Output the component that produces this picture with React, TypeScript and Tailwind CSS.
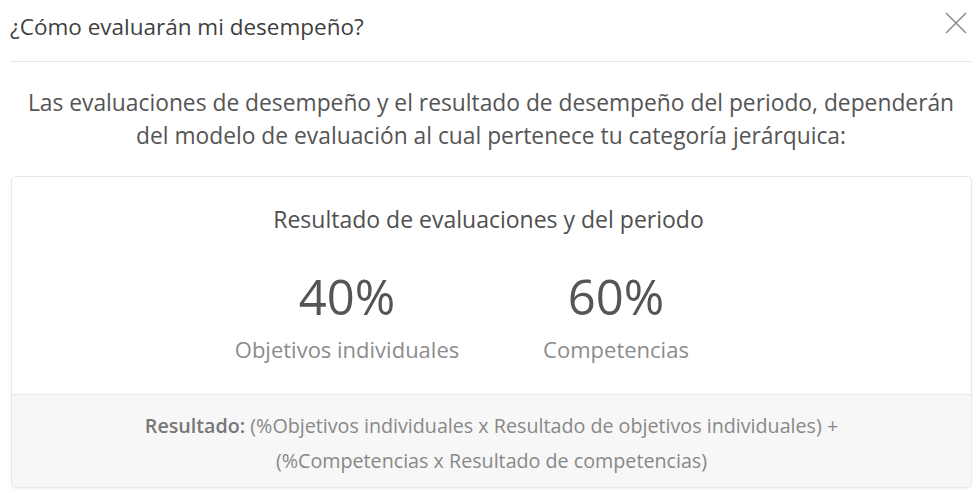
import React from 'react';

const App: React.FC = () => {
  return (
    <div className="w-[978px] h-[493px] bg-white pl-[10px] pr-[6px] font-['Open_Sans',sans-serif] text-[#555]">
      <div className="flex items-start justify-between h-[62px] border-b border-[#e6e6e6] pt-[12px]">
        <h1 className="text-[22.5px] leading-[30px] text-[#3f3f3f]">¿Cómo evaluarán mi desempeño?</h1>
        <svg width="22" height="22" viewBox="0 0 22 22" className="mr-[5px]">
          <path d="M1 1 L21 21 M21 1 L1 21" stroke="#8a8a8a" strokeWidth="1.5" fill="none" />
        </svg>
      </div>
      <p className="mt-[24px] text-center text-[22.8px] leading-[33px] text-[#555]">
        Las evaluaciones de desempeño y el resultado de desempeño del periodo, dependerán
        <br />
        del modelo de evaluación al cual pertenece tu categoría jerárquica:
      </p>
      <div className="mt-[24px] ml-[1px] rounded-[5px] border border-[#e8e8e8] shadow-[0_1px_2px_rgba(0,0,0,0.07)] overflow-hidden">
        <div className="h-[217px] flex flex-col items-center pt-[27px] pr-[6px]">
          <div className="text-[23px] leading-[30px] font-medium text-[#4f4f4f]">Resultado de evaluaciones y del periodo</div>
          <div className="grid grid-cols-[269px_269px] mt-[34px] pr-[14px]">
            <div className="flex flex-col items-center">
              <div className="text-[49px] leading-[56px] text-[#555]">40%</div>
              <div className="text-[22px] leading-[30px] text-[#8c8c8c] mt-[10px]">Objetivos individuales</div>
            </div>
            <div className="flex flex-col items-center">
              <div className="text-[49px] leading-[56px] text-[#555]">60%</div>
              <div className="text-[22px] leading-[30px] text-[#8c8c8c] mt-[10px]">Competencias</div>
            </div>
          </div>
        </div>
        <div className="bg-[#f7f7f7] border-t border-[#ebebeb] h-[93px] flex items-center justify-center pt-[4px]">
          <p className="text-center text-[19.7px] leading-[35px] text-[#888]">
            <span className="font-semibold text-[#777]">Resultado:</span> (%Objetivos individuales x Resultado de objetivos individuales) +
            <br />
            (%Competencias x Resultado de competencias)
          </p>
        </div>
      </div>
    </div>
  );
};

export default App;
